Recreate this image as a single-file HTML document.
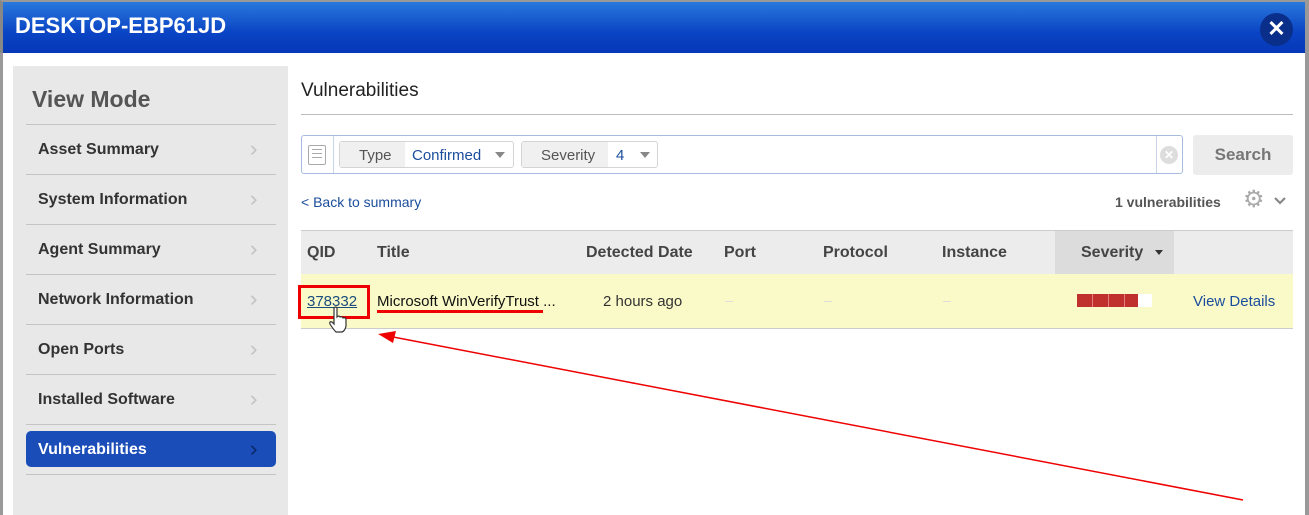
<!DOCTYPE html>
<html><head><meta charset="utf-8"><style>
*{margin:0;padding:0;box-sizing:border-box}
body{width:1309px;height:515px;overflow:hidden;background:#fff;font-family:"Liberation Sans",Arial,sans-serif;position:relative}
.a{position:absolute}
.hdr{left:0;top:0;width:1309px;height:53px;background:linear-gradient(#2a78dc,#0a44c4 60%,#0538b8);border-left:3px solid #888;border-top:2px solid #999}
.hdr h1{position:absolute;left:12px;top:11px;color:#fff;font-size:22px;font-weight:bold}
.close{left:1260px;top:13px;width:33px;height:33px;border-radius:50%;background:#0a2f8a;color:#fff;font-size:22px;font-weight:bold;text-align:center;line-height:32px}
.lb{left:0;top:53px;width:3px;height:462px;background:#999}
.rb{left:1305px;top:0;width:4px;height:515px;background:#999}
.side{left:13px;top:66px;width:275px;height:449px;background:#e8e8e8}
.vm{left:32px;top:86px;font-size:23px;font-weight:bold;color:#555}
.line{height:1px;background:#c4c4c4;left:26px;width:250px}
.it{left:38px;font-size:16px;font-weight:bold;color:#333}
.chev{left:250px;color:#c4c4c4;font-size:22px;transform:scaleX(1.1)}
.act{left:26px;top:431px;width:250px;height:36px;background:#1a4db8;border-radius:5px}
.t{font-size:14px;color:#333}
.th{font-size:16px;font-weight:bold;color:#444}
</style></head><body>
<div class="a hdr"><h1>DESKTOP-EBP61JD</h1></div>
<div class="a close">✕</div>
<div class="a lb"></div><div class="a rb"></div>
<div class="a side"></div>
<div class="a vm">View Mode</div>
<div class="a line" style="top:124px"></div>
<div class="a it" style="top:141px">Asset Summary</div><div class="a chev" style="top:136px">›</div>
<div class="a line" style="top:174px"></div>
<div class="a it" style="top:191px">System Information</div><div class="a chev" style="top:186px">›</div>
<div class="a line" style="top:224px"></div>
<div class="a it" style="top:241px">Agent Summary</div><div class="a chev" style="top:236px">›</div>
<div class="a line" style="top:274px"></div>
<div class="a it" style="top:291px">Network Information</div><div class="a chev" style="top:286px">›</div>
<div class="a line" style="top:324px"></div>
<div class="a it" style="top:341px">Open Ports</div><div class="a chev" style="top:336px">›</div>
<div class="a line" style="top:374px"></div>
<div class="a it" style="top:391px">Installed Software</div><div class="a chev" style="top:386px">›</div>
<div class="a line" style="top:424px"></div>
<div class="a act"></div>
<div class="a it" style="top:441px;color:#fff">Vulnerabilities</div><div class="a chev" style="top:436px;color:#0c2a6a">›</div>
<div class="a line" style="top:474px"></div>

<div class="a" style="left:301px;top:80px;font-size:19px;color:#222">Vulnerabilities</div>
<div class="a" style="left:301px;top:114px;width:992px;height:1px;background:#bbb"></div>
<div class="a" style="left:301px;top:135px;width:882px;height:39px;border:1px solid #a8bce0;border-radius:3px;background:#fff"></div>
<div class="a" style="left:333px;top:136px;width:1px;height:37px;background:#c8d4ea"></div>
<div class="a" style="left:308px;top:145px;width:18px;height:20px;border:1px solid #aaa;border-radius:2px;background:repeating-linear-gradient(#fff 0 3px,#aaa 3px 4px);background-clip:content-box;padding:3px"></div>
<div class="a" style="left:339px;top:141px;width:175px;height:27px;border:1px solid #d4d4d4;border-radius:3px;background:#fff"></div>
<div class="a" style="left:340px;top:142px;width:65px;height:25px;background:#f0f0f0"></div>
<div class="a t" style="left:359px;top:147px;font-size:15px;color:#555">Type</div>
<div class="a t" style="left:412px;top:147px;font-size:15px;color:#1a4d9c">Confirmed</div>
<div class="a" style="left:495px;top:152px;border:5px solid transparent;border-top:6px solid #888"></div>
<div class="a" style="left:521px;top:141px;width:137px;height:27px;border:1px solid #d4d4d4;border-radius:3px;background:#fff"></div>
<div class="a" style="left:522px;top:142px;width:86px;height:25px;background:#f0f0f0"></div>
<div class="a t" style="left:541px;top:147px;font-size:15px;color:#555">Severity</div>
<div class="a t" style="left:616px;top:147px;font-size:15px;color:#1a4d9c">4</div>
<div class="a" style="left:640px;top:152px;border:5px solid transparent;border-top:6px solid #888"></div>
<div class="a" style="left:1156px;top:136px;width:1px;height:37px;background:#c8d4ea"></div>
<div class="a" style="left:1160px;top:146px;width:18px;height:18px;border-radius:50%;background:#ddd;color:#fff;font-size:12px;text-align:center;line-height:18px;font-weight:bold">✕</div>
<div class="a" style="left:1193px;top:135px;width:100px;height:40px;background:#ececec;border-radius:3px;font-size:17px;font-weight:bold;color:#777;text-align:center;line-height:40px">Search</div>

<div class="a t" style="left:301px;top:194px;color:#1a4d9c">&lt; Back to summary</div>
<div class="a t" style="left:1115px;top:194px;font-weight:bold;color:#555">1 vulnerabilities</div>
<div class="a" style="left:1243px;top:188px;font-size:24px;color:#aaa;line-height:24px">⚙</div>
<svg class="a" style="left:1273px;top:196px" width="14" height="10"><path d="M2 2 L7 7 L12 2" stroke="#888" stroke-width="2.2" fill="none"/></svg>

<div class="a" style="left:301px;top:230px;width:992px;height:1px;background:#ccc"></div>
<div class="a" style="left:301px;top:231px;width:992px;height:43px;background:#ececec"></div>
<div class="a" style="left:1055px;top:231px;width:119px;height:43px;background:#dcdcdc"></div>
<div class="a th" style="left:307px;top:244px">QID</div>
<div class="a th" style="left:377px;top:244px">Title</div>
<div class="a th" style="left:586px;top:244px">Detected Date</div>
<div class="a th" style="left:724px;top:244px">Port</div>
<div class="a th" style="left:823px;top:244px">Protocol</div>
<div class="a th" style="left:942px;top:244px">Instance</div>
<div class="a th" style="left:1081px;top:244px">Severity</div>
<div class="a" style="left:1155px;top:250px;border:4px solid transparent;border-top:5px solid #333"></div>
<div class="a" style="left:301px;top:274px;width:992px;height:55px;background:#fafac8;border-bottom:1px solid #ccc"></div>
<div class="a" style="left:298px;top:285px;width:72px;height:34px;border:3px solid #e00"></div>
<div class="a t" style="left:307px;top:293px;font-size:15px;color:#1a4d7c;text-decoration:underline">378332</div>
<div class="a t" style="left:377px;top:293px;color:#111;font-size:15px">Microsoft WinVerifyTrust ...</div>
<div class="a" style="left:377px;top:310px;width:166px;height:3px;background:#e00"></div>
<div class="a t" style="left:603px;top:293px;font-size:15px">2 hours ago</div>
<div class="a" style="left:725px;top:301px;width:8px;height:1px;background:#ddd"></div>
<div class="a" style="left:824px;top:301px;width:8px;height:1px;background:#ddd"></div>
<div class="a" style="left:943px;top:301px;width:8px;height:1px;background:#ddd"></div>
<div class="a" style="left:1077px;top:294px;width:75px;height:13px;background:#fff"></div>
<div class="a" style="left:1077px;top:294px;width:61px;height:13px;background:repeating-linear-gradient(90deg,#c0302c 0 15px,#e08080 15px 16px)"></div>
<div class="a t" style="left:1193px;top:293px;font-size:15px;color:#1a4d9c">View Details</div>
<svg class="a" style="left:326px;top:306px" width="22" height="28"><path d="M8 2 Q10 0 11 2 L11 11 Q13 9 14 11 Q16 10 17 12 Q19 11 20 13 L20 20 Q19 25 16 26 L10 26 Q7 23 4 18 Q3 15 6 16 L8 18 Z" fill="#fff" stroke="#333" stroke-width="1.2"/></svg>
<svg class="a" style="left:0;top:0" width="1309" height="515"><line x1="1243" y1="500" x2="388" y2="336" stroke="#e00" stroke-width="1.5"/><polygon points="378,334 396,331 393,343" fill="#e00"/></svg>
</body></html>
